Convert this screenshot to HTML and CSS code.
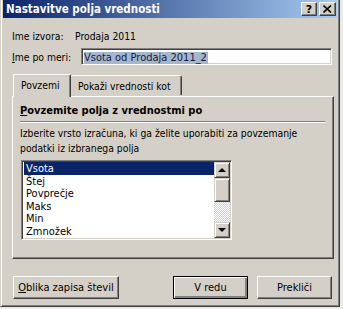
FILE: index.html
```html
<!DOCTYPE html>
<html lang="sl">
<head>
    <meta charset="UTF-8">
    <title>Nastavitve polja vrednosti</title>
    <link rel="stylesheet" href="styles.css">
</head>
<body>
    <div class="window">
        <div class="titlebar">
            <span class="title">Nastavitve polja vrednosti</span>
            <div class="caption-buttons">
                <span class="cap-btn help">?</span>
                <span class="cap-btn close">
                    <svg width="9" height="8" viewBox="0 0 9 8"><path d="M0.5 0.5L8 7.5M8 0.5L0.5 7.5" stroke="#000" stroke-width="1.6"/></svg>
                </span>
            </div>
        </div>

        <div class="content">
            <div class="row source">
                <span class="label">Ime izvora:</span>
                <span>Prodaja 2011</span>
            </div>
            <div class="row custom">
                <span class="label custom-label"><u>I</u>me po meri:</span>
                <div class="textbox"><span class="selected-text">Vsota od Prodaja 2011_2</span></div>
            </div>

            <div class="tabs">
                <div class="tab active">Povzemi</div>
                <div class="tab">Pokaži vrednosti kot</div>
            </div>
            <div class="panel">
                <div class="group-title"><u>P</u>ovzemite polja z vrednostmi po</div>
                <div class="etched"></div>
                <p class="hint">Izberite vrsto izračuna, ki ga želite uporabiti za povzemanje podatki iz izbranega polja</p>
                <div class="listbox">
                    <ul class="items">
                        <li class="sel">Vsota</li>
                        <li>Štej</li>
                        <li>Povprečje</li>
                        <li>Maks</li>
                        <li>Min</li>
                        <li>Zmnožek</li>
                    </ul>
                    <div class="scrollbar">
                        <div class="sb-btn"><span class="arrow up"></span></div>
                        <div class="thumb"></div>
                        <div class="track"></div>
                        <div class="sb-btn"><span class="arrow down"></span></div>
                    </div>
                </div>
            </div>

            <div class="buttons">
                <button class="btn format"><u>O</u>blika zapisa števil</button>
                <div class="spacer"></div>
                <button class="btn default">V redu</button>
                <button class="btn">Prekliči</button>
            </div>
        </div>
    </div>
</body>
</html>
```

FILE: styles.css
```css
* {
    margin: 0;
    padding: 0;
    box-sizing: border-box;
}

body {
    background-color: #eceae6;
    font-family: "DejaVu Sans Condensed", "DejaVu Sans", sans-serif;
    font-size: 10.3px;
    color: #000;
}

.window {
    width: 340px;
    height: 307px;
    background-color: #d4d0c8;
    border: 1px solid;
    border-top: 0;
    border-color: #d4d0c8 #404040 #404040 #d4d0c8;
    box-shadow: inset 1px 0 #fff, inset -1px -1px #808080;
    padding: 0 2px 0 2px;
}

.titlebar {
    height: 18px;
    background-image: linear-gradient(90deg, #0a246a, #a6caf0);
    display: flex;
    align-items: center;
    padding-left: 3px;
}

.title {
    color: #fff;
    font-weight: bold;
    font-size: 11.5px;
    flex: 1;
}

.caption-buttons {
    display: flex;
    gap: 2px;
    padding-right: 1px;
}

.cap-btn {
    width: 16px;
    height: 14px;
    background-color: #d4d0c8;
    border: 1px solid;
    border-color: #fff #404040 #404040 #fff;
    box-shadow: inset -1px -1px #808080;
    display: flex;
    align-items: center;
    justify-content: center;
    font-weight: bold;
    font-size: 11px;
    font-family: "DejaVu Sans", sans-serif;
}

.cap-btn.close {
    width: 17px;
}

.content {
    padding: 0 5px 0 9px;
}

.row {
    display: flex;
    align-items: center;
}

.source {
    margin-top: 11px;
    height: 14px;
}

.source .label {
    width: 63px;
}

.custom {
    margin-top: 5px;
    height: 17px;
}

.custom-label {
    width: 69px;
}

.textbox {
    flex: 1;
    height: 17px;
    background-color: #fff;
    border: 1px solid;
    border-color: #808080 #fff #fff #808080;
    box-shadow: inset 1px 1px #404040, inset -1px -1px #d4d0c8;
    padding: 2px 2px 0 2px;
    display: flex;
    align-items: center;
    font-size: 11px;
}

.selected-text {
    background-color: #a5b6cf;
    color: #1a1a3a;
    line-height: 12px;
    padding-right: 1px;
}

.tabs {
    display: flex;
    margin-top: 9px;
    height: 22px;
    align-items: flex-end;
    padding-left: 1px;
}

.tab {
    height: 20px;
    padding: 0 9px 0 7px;
    display: flex;
    align-items: center;
    border: 1px solid;
    border-bottom: 0;
    border-color: #fff #404040 #fff #fff;
    box-shadow: inset -1px 0 #808080;
    border-radius: 2px 2px 0 0;
    margin-bottom: 1px;
}

.tab.active {
    height: 23px;
    width: 58px;
    margin-bottom: -1px;
    background-color: #d4d0c8;
    position: relative;
    z-index: 1;
    padding-bottom: 2px;
}

.tab:not(.active) {
    width: 111px;
    border-left: 0;
}

.panel {
    height: 163px;
    width: 322px;
    border: 1px solid;
    border-color: #fff #404040 #404040 #fff;
    box-shadow: inset -1px -1px #808080;
    padding: 6px 8px 0 7px;
}

.group-title {
    font-weight: bold;
    font-size: 11px;
    height: 15px;
    line-height: 15px;
}

.etched {
    height: 2px;
    border-top: 1px solid #808080;
    border-bottom: 1px solid #fff;
    margin-top: 3px;
}

.hint {
    margin-top: 3px;
    line-height: 15px;
    width: 305px;
}

.listbox {
    margin-top: 4px;
    margin-left: 1px;
    width: 211px;
    height: 80px;
    background-color: #fff;
    border: 1px solid;
    border-color: #808080 #fff #fff #808080;
    box-shadow: inset 1px 1px #404040, inset -1px -1px #d4d0c8;
    padding: 1px 1px 1px 2px;
    display: flex;
}

.items {
    list-style: none;
    flex: 1;
    overflow: hidden;
    font-size: 11px;
}

.items li {
    height: 12.6px;
    line-height: 13px;
    padding-left: 2px;
}

.items li.sel {
    background-color: #0a246a;
    color: #fff;
}

.scrollbar {
    width: 16px;
    display: flex;
    flex-direction: column;
}

.sb-btn, .thumb {
    background-color: #d4d0c8;
    border: 1px solid;
    border-color: #d4d0c8 #404040 #404040 #d4d0c8;
    box-shadow: inset 1px 1px #fff, inset -1px -1px #808080;
}

.sb-btn {
    height: 16px;
    display: flex;
    align-items: center;
    justify-content: center;
}

.thumb {
    height: 24px;
}

.track {
    flex: 1;
    background: repeating-conic-gradient(#d4d0c8 0 25%, #fff 0 50%) 0 0 / 2px 2px;
}

.arrow {
    width: 0;
    height: 0;
    border-left: 4px solid transparent;
    border-right: 4px solid transparent;
}

.arrow.up {
    border-bottom: 4px solid #000;
}

.arrow.down {
    border-top: 4px solid #000;
}

.buttons {
    display: flex;
    margin-top: 17px;
    padding-left: 1px;
    gap: 9px;
}

.spacer {
    flex: 1;
}

.btn {
    height: 23px;
    width: 75px;
    font-family: inherit;
    font-size: 11px;
    background-color: #d4d0c8;
    border: 1px solid;
    border-color: #fff #404040 #404040 #fff;
    box-shadow: inset -1px -1px #808080;
}

.btn.format {
    width: 106px;
}

.btn.default {
    border: 1px solid #000;
    box-shadow: inset 1px 1px #fff, inset -2px -2px #808080;
}
```
